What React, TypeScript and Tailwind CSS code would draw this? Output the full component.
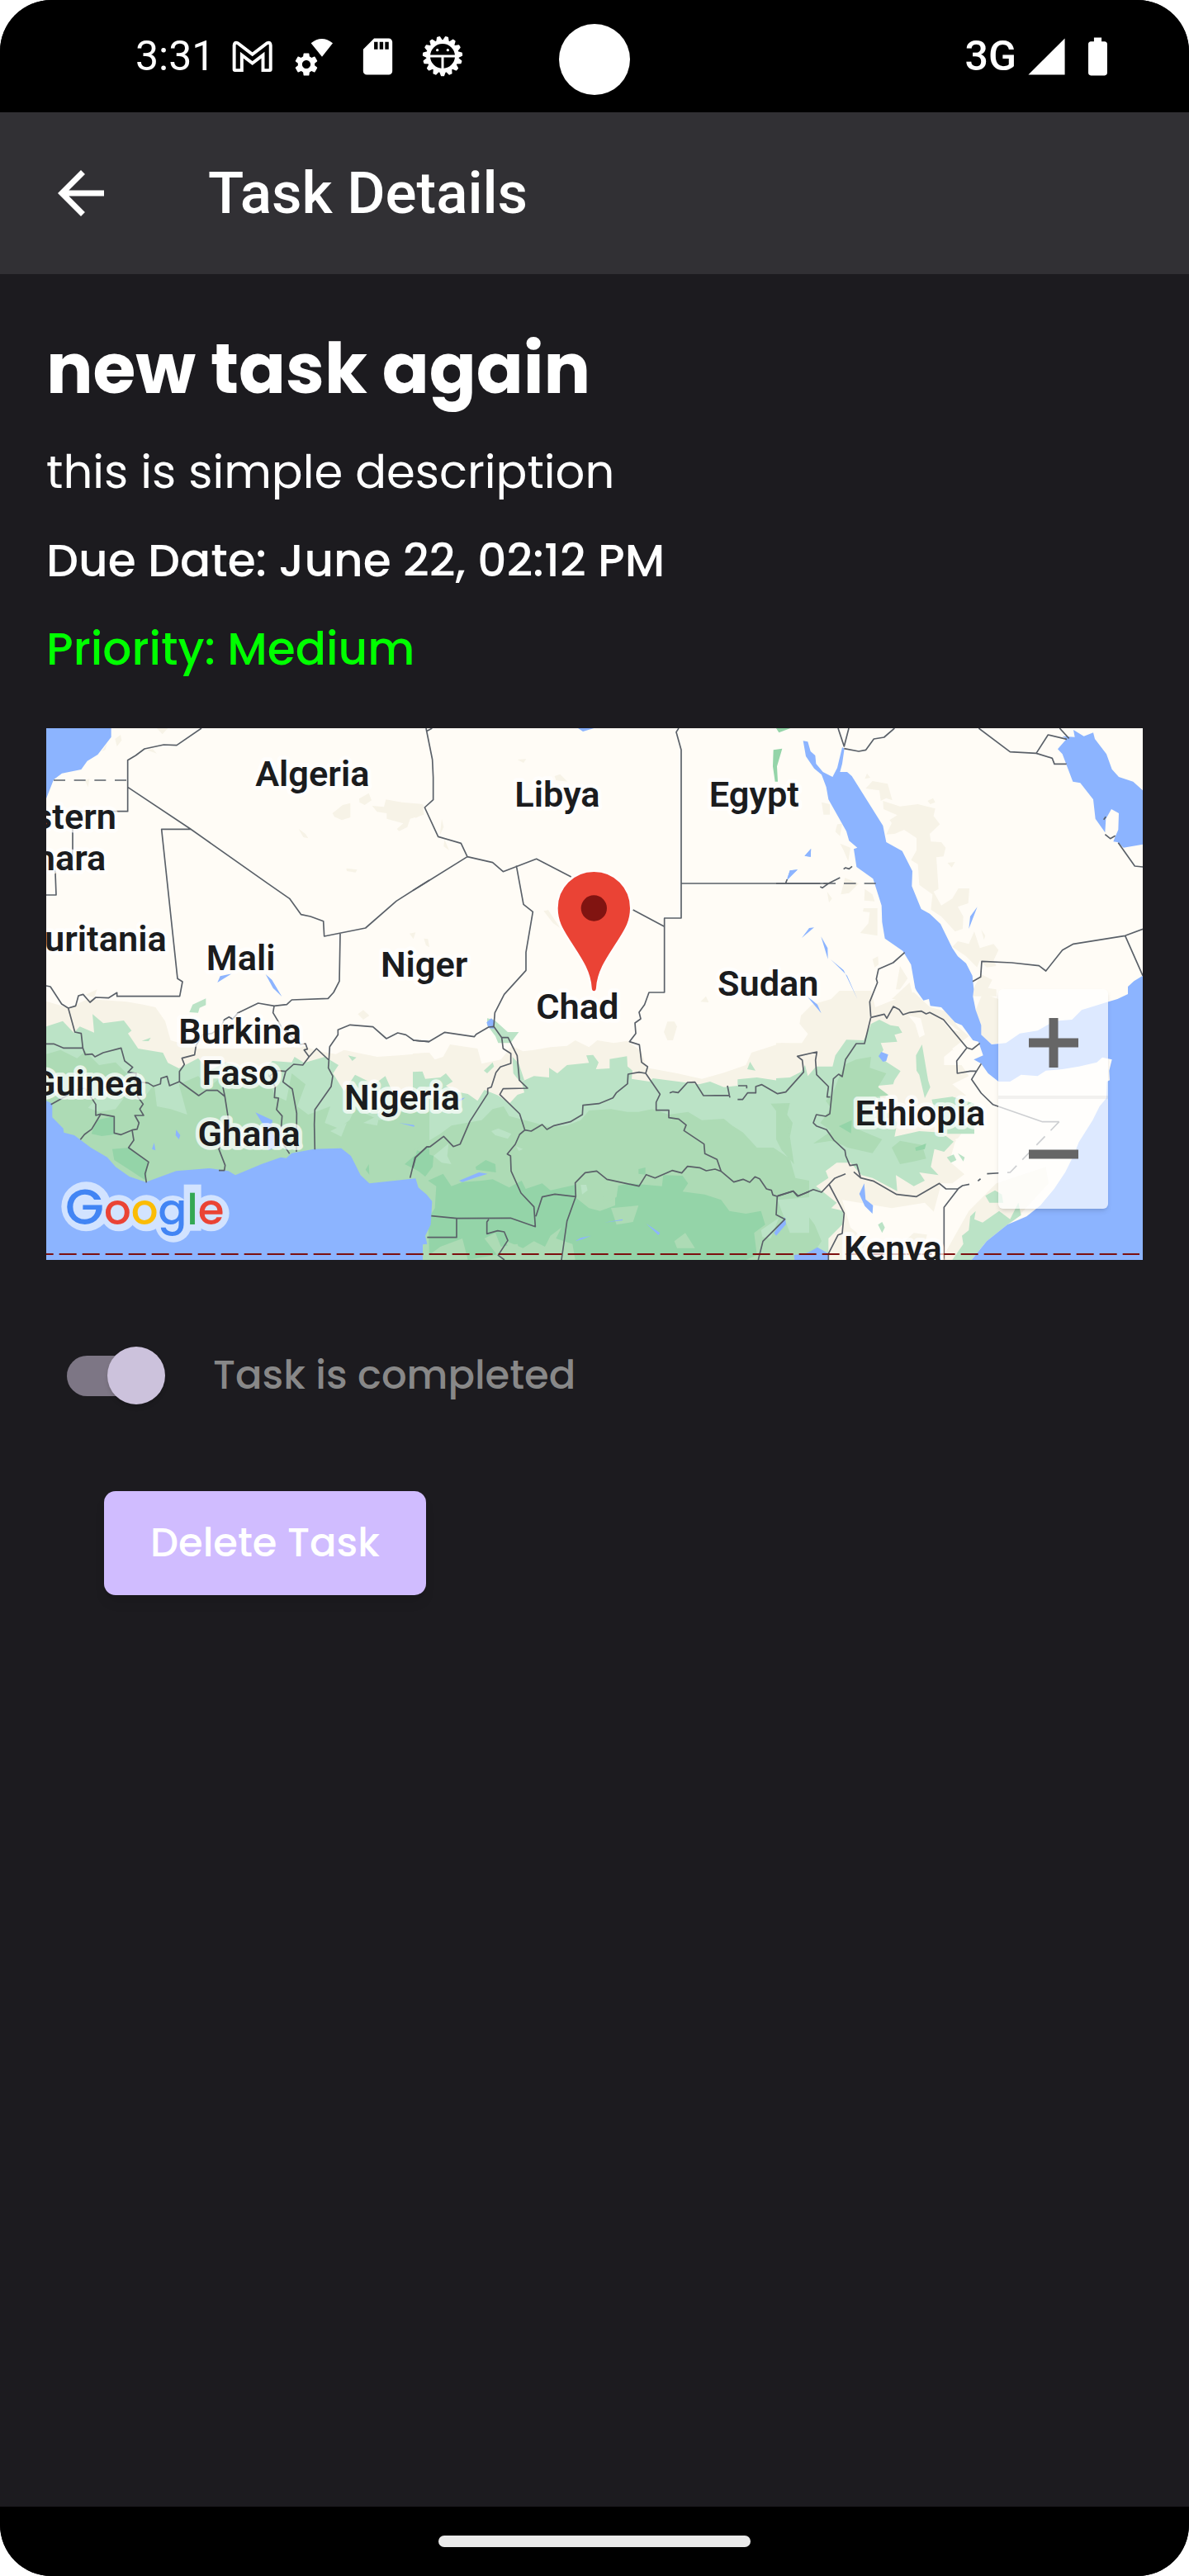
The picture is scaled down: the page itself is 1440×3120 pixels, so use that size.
import { useState } from "react";
import {
  MdArrowBack,
  MdBatteryFull,
  MdSdCard,
  MdSettings,
  MdSignalCellular4Bar,
} from "react-icons/md";

const BUG_TEETH = Array.from({ length: 15 }, (_, i) => 12 + i * 24);

function GmailIcon() {
  return (
    <svg viewBox="421 81 152 120" className="h-10 w-[50px]" aria-hidden="true">
      <path
        d="M429 190V101Q430 88 442 93L496 134L550 93Q562 88 563 101V190Q563 193 560 193H535V137L496 167L457 137V193H432Q429 193 429 190Z"
        fill="none"
        stroke="#fff"
        strokeWidth="12"
      />
    </svg>
  );
}

function WifiGearIcon() {
  return (
    <div className="relative h-[46px] w-[46px]">
      <svg viewBox="658 76 138 138" className="h-full w-full" aria-hidden="true">
        <path d="M714 98Q753 66 793 98L754 147Z" fill="#fff" />
      </svg>
      <MdSettings className="absolute -bottom-1 -left-1 size-[34px] text-white" />
    </div>
  );
}

function DebugIcon() {
  return (
    <svg viewBox="-75 -75 150 150" className="size-[50px]" aria-hidden="true">
      {BUG_TEETH.map((a) => (
        <path
          key={a}
          d="M-10 -54L-4 -70H4L10 -54Z"
          fill="#fff"
          stroke="#fff"
          strokeWidth="5"
          strokeLinejoin="round"
          transform={`rotate(${a})`}
        />
      ))}
      <circle r="52" fill="#000" stroke="#fff" strokeWidth="14" />
      <path d="M-46 0H46M0 0V48" stroke="#fff" strokeWidth="9" />
      <circle cx="-19" cy="-22" r="5" fill="#fff" />
      <circle cx="19" cy="-22" r="5" fill="#fff" />
    </svg>
  );
}

function StatusBar() {
  return (
    <div className="relative flex h-[136px] items-center justify-between bg-black pr-[83px] pl-[164px] font-[Roboto,sans-serif] text-white">
      <div className="flex items-center gap-[21px]">
        <span className="text-[50px] leading-none">3:31</span>
        <div className="flex items-center gap-[27px]">
          <GmailIcon />
          <WifiGearIcon />
          <MdSdCard className="size-[53px]" />
          <DebugIcon />
        </div>
      </div>
      <div className="absolute top-[29px] left-1/2 size-[86px] -translate-x-1/2 rounded-full bg-white" />
      <div className="flex items-center">
        <span className="mr-[10px] text-[50px] leading-none font-medium">3G</span>
        <MdSignalCellular4Bar className="mr-2 size-[53px]" />
        <MdBatteryFull className="size-[55px]" />
      </div>
    </div>
  );
}

type Label = { text: string; x: number; y: number; anchor?: "middle" | "end" };

const LABELS: Label[] = [
  { text: "Algeria", x: 1015, y: 245 },
  { text: "Western", x: 303, y: 403, anchor: "end" },
  { text: "Sahara", x: 265, y: 552, anchor: "end" },
  { text: "Mauritania", x: 485, y: 845, anchor: "end" },
  { text: "Mali", x: 755, y: 915 },
  { text: "Niger", x: 1421, y: 940 },
  { text: "Libya", x: 1905, y: 320 },
  { text: "Egypt", x: 2620, y: 320 },
  { text: "Sudan", x: 2671, y: 1008 },
  { text: "Chad", x: 1978, y: 1093 },
  { text: "Burkina", x: 752, y: 1183 },
  { text: "Faso", x: 753, y: 1333 },
  { text: "Guinea", x: 401, y: 1370, anchor: "end" },
  { text: "Ghana", x: 785, y: 1555 },
  { text: "Nigeria", x: 1341, y: 1423 },
  { text: "Ethiopia", x: 3223, y: 1480 },
  { text: "Kenya", x: 3124, y: 1970 },
];

/* Each group covers one sheet of the map: three columns by two rows. */
function MapDrawing() {
  return (
    <svg
      viewBox="48 36 3984 1932"
      preserveAspectRatio="xMidYMid slice"
      className="absolute inset-0 h-full w-full"
      role="img"
      aria-label="Map of northern and central Africa"
    >
      <rect x="48" y="36" width="3984" height="1932" fill="#fffcf6" />

      {/* Arid terrain */}
      <g fill="#f7f3e7">
        <path d="M298 75L318 60L322 80L305 102ZM250 120L270 90L262 115ZM450 36H490L470 58ZM188 225L205 220L200 250ZM1088 345L1125 315L1153 308V360L1122 370L1095 358ZM1185 292L1220 272L1230 298L1205 315L1186 305ZM1232 318L1275 322L1282 295L1340 305L1415 312L1420 350L1370 365L1360 395L1330 410L1322 402L1345 382L1285 365V345L1250 340ZM965 402L990 420L1000 436L982 432ZM1138 545L1178 550L1172 560L1140 555ZM190 1005L233 985L222 1015ZM1368 782L1390 778L1382 802ZM412 115L435 112L450 128Z" />
        <g transform="translate(1380 0)">
          <path d="M0 312L40 315L35 350L10 362L0 345ZM105 365L112 395L98 425ZM115 440L132 480L112 465ZM380 150L412 148L402 162ZM515 210L535 203L562 230L520 225ZM475 700L492 697L535 762L510 745ZM40 800L55 802L60 832L48 825Z" />
        </g>
        <g transform="translate(2700 0)">
          <path d="M322 220L330 200L342 216ZM325 255L350 228L405 238L422 298L400 290L380 300L375 262ZM388 300L450 320L515 312L578 328L572 355L595 385L558 420L562 448L600 450L616 470L608 502L582 505L590 620L572 630L600 680L640 655L662 618L702 618L698 672L660 685L680 720L678 765L650 775L600 720L562 695L568 640L520 605L515 530L490 515L510 480V435L465 405L430 420L400 422L420 380L412 370L440 352L390 330ZM165 305L195 312V350L172 350ZM222 385L240 383L232 428L215 412ZM232 455L270 470L262 520L245 480ZM250 580L300 600L265 635L235 640ZM185 630L203 655L192 670ZM322 620L350 640L358 665L320 662ZM318 690L368 690V790L305 780L335 745L340 705L315 702ZM550 300L570 290L578 305L560 312ZM622 525L650 522L638 542ZM660 810L700 820L720 775L740 835L790 820L808 842L790 880L800 900L765 905L740 880L730 905L690 865L640 830ZM745 768L760 790L755 805ZM350 875L370 865L372 895L358 905ZM745 930L785 950L770 980L800 985V1010H715V985ZM450 900L478 945L450 985L435 985ZM230 1015L270 990L295 1020ZM485 960L500 1020H420Z" />
        </g>
        <g transform="translate(0 990)">
          <path d="M48 38L130 62L200 30L340 40L400 50L445 60L480 110L500 180L600 210L880 210L980 200L1040 220L1100 230L1130 215L1250 240L1330 235L1440 225V470L1000 420H560L48 300ZM1180 85L1200 70L1222 90L1200 105Z" />
        </g>
        <g transform="translate(1380 990)">
          <path d="M0 228L60 225L80 250L110 240L135 195L235 210L250 265L320 250L360 200L400 220L440 215L500 205L560 200L590 180L640 205L670 180L730 190L780 182L830 220L850 280L960 300L1050 320L1130 298L1210 270L1230 225L1340 190L1410 195L1440 150V420H0ZM925 112L950 112L960 130L945 180L925 180L912 150ZM1045 40L1065 20L1075 42Z" />
        </g>
        <g transform="translate(2700 990)">
          <path d="M90 90L130 50L200 30L230 0H345L360 60L460 20L500 5L560 60L620 75L660 130L700 165L640 210L660 250L700 310L640 340L690 380L640 400L750 500L650 540L720 640L640 700L600 700L560 850L520 978H180L60 700L0 400V190L105 190L118 160L85 120Z" />
          <path d="M725 70L750 10L808 30V190L783 195L745 160ZM700 800L800 700L980 640L990 700L870 830L680 978H600Z" />
        </g>
      </g>
      <g fill="#fffcf6">
        <path d="M3180 1080L3225 1090L3240 1150L3220 1160L3205 1110ZM3290 1080L3370 1140L3330 1130ZM3310 1230L3340 1205L3400 1240L3380 1260L3310 1260ZM3350 1540L3380 1500L3500 1480V1600L3400 1670L3330 1610ZM3120 1780L3240 1760L3330 1850L3280 1880L3200 1870L3100 1960L2970 1850L2940 1750Z" />
      </g>

      {/* Savanna */}
      <g fill="#bbe3c6">
        <g transform="translate(0 990)">
          <path d="M48 130L108 110L148 152L170 130L222 152L216 85L255 118L330 108L358 145L345 155L382 210L472 225L490 262L530 282L600 245L640 290L700 260L820 300L870 255L940 260L950 240L985 262L1060 240L1110 270L1090 300L1130 365L1170 305L1240 340L1280 310L1320 400L1440 370V978H48ZM568 78L580 50L628 28L628 52L605 62L600 80ZM395 182L428 170L420 183ZM1145 235L1175 242L1160 255Z" />
        </g>
        <g transform="translate(1380 990)">
          <path d="M0 295L35 293L45 320L100 315L120 300L145 330L120 345L150 365L200 375L235 400L260 360L310 380L350 410L380 378L405 370L395 330L440 310L495 315L495 280L525 300L560 270L640 262L630 235L655 233L675 260L665 285L715 282L715 248L778 238L780 275L798 290L795 320L860 330L872 318L1040 340L1080 330L1130 350L1180 345V322L1250 315L1350 330L1440 320V978H0ZM270 100L295 105L345 150L385 150L355 190L310 190L300 165L270 125ZM362 240L385 265L405 325L388 330L365 300ZM258 290L290 260L295 275L270 300ZM1215 285L1225 258L1245 290Z" />
        </g>
        <g transform="translate(2700 990)">
          <path d="M0 318L50 315L90 295L105 270L115 310L145 275L205 275L215 235L255 178L318 180L345 120L375 105L415 125L445 130L458 152L430 160L440 185L380 190L390 215L375 235L400 258L452 292L430 325L425 340L370 345L380 400L440 480L430 530L520 510L600 515L645 548L610 585L575 575L562 640L590 670L520 660L540 690L500 710L435 670L440 728L350 680L310 670L270 625L220 625L180 655L190 680L145 710L220 770L200 790L245 800L240 850L190 900V978H0ZM508 235L530 195L552 325L560 350L540 390L520 305L510 290ZM565 395L640 385L720 410V520H600ZM620 605L645 595L655 615L635 625ZM680 620L660 590L685 605ZM760 745L795 725L820 740L825 770L775 770ZM705 820L725 800L720 830L750 842L810 800L850 830L880 770L890 815L840 850L765 910L710 978H640L680 920L675 890L700 870ZM370 850L385 840L395 860L385 880Z" />
        </g>
      </g>

      {/* Woodland */}
      <g fill="#addbb5">
        <g transform="translate(0 990)">
          <path d="M48 230L100 215L160 245L190 220L240 270L300 260L340 300L390 300L380 360L410 380L440 340L450 420L500 430L560 450L530 340L600 310L640 350L700 300L760 340L840 300L880 380L920 400L940 300L990 340L960 420L1000 450L1080 420L1060 480L1110 500L1150 470L1170 430L1260 470L1330 440L1440 440V760L48 720Z" />
        </g>
        <g transform="translate(1380 990)">
          <path d="M0 580L100 520L140 490L250 470L290 430L330 420L350 455L500 495L560 490L610 470L640 435L720 430L780 440L820 440L870 430L930 450L1000 440L1050 470L1130 465L1160 490L1200 515L1250 570L1310 570L1370 610L1390 680L1440 690V978H0ZM1300 410L1370 408L1360 450L1380 480L1370 530L1385 630L1350 590L1345 470Z" />
        </g>
        <g transform="translate(2700 990)">
          <path d="M250 268L290 250L345 240L340 280L400 300L370 350L410 380L300 390L310 420L210 440L180 400L205 375L230 310ZM0 430L30 410L60 620L20 580L0 540ZM135 555L200 510L160 480L220 400L290 380L290 500L385 540L350 590L260 570L240 560L200 545ZM420 570L450 545L530 560L545 610L500 620L450 630ZM0 790L80 770L140 850L165 910L120 978H0Z" />
        </g>
      </g>
      <g fill="#bbe3c6">
        <g transform="translate(1380 990)">
          <path d="M285 510L310 500L358 520L345 538L300 525ZM75 600L130 555L125 600L140 630L105 625ZM375 565L400 575L385 582ZM610 705L630 705L635 725L615 740ZM1265 870L1330 825L1300 900L1270 895ZM1325 760L1440 750V880L1370 880L1340 800Z" />
        </g>
        <path d="M200 1415L250 1360L330 1380L300 1420L240 1430ZM1200 1470L1260 1440L1250 1480ZM1080 1500L1140 1470L1120 1520Z" />
      </g>

      {/* Rain forest */}
      <g fill="#94d4a8">
        <g transform="translate(0 990)">
          <path d="M212 520L230 470L295 455V522L250 528ZM288 575L350 570L418 620L410 690L350 650L295 615ZM1350 630L1385 600L1440 565V650L1400 655ZM1208 650L1220 630L1222 668Z" />
        </g>
        <g transform="translate(1380 990)">
          <path d="M0 640L15 580L75 600L72 640L45 675L0 640ZM55 690L110 665L140 710L180 695L250 690L290 685L350 715L395 690L410 720L470 700L500 725L590 705L590 750L640 790L680 800L735 780V710L790 700L905 710L910 670L980 672L1000 700L980 730L1060 740L1120 760L1150 800L1210 810L1265 800L1280 850L1240 880L1250 960L1210 978H590L580 920L520 900L540 860L500 890L480 930L440 910L400 935L340 910L350 950L200 978L180 900L100 930L60 960L55 830L80 790L85 710ZM228 640L265 615L300 630L302 660L230 650ZM820 648L845 642L845 668L820 665Z" />
        </g>
        <path d="M2928 1482L2975 1460L2972 1508ZM3205 1560L3245 1545L3240 1565L3208 1572ZM2690 115L2722 110L2703 175L2706 230L2696 230L2688 175Z" />
        <path d="M2700 36H2752L2710 52Z" />
      </g>
      <g fill="#addbb5">
        <path d="M1640 1890L1680 1870L1700 1920L1760 1910L1780 1968H1700ZM2100 1780L2200 1770L2180 1830L2120 1840ZM2330 1900L2370 1870L2405 1925H2340ZM2080 1680L2130 1670L2120 1740L2070 1760Z" />
      </g>

      {/* Seas, lakes and rivers */}
      <g fill="#8cb4ff">
        <path d="M48 36H284V68L235 132L197 155L175 186L105 200L75 223L48 292Z" />
        <path d="M670 960L680 937L722 928ZM845 930L868 950L904 1011L872 980Z" />
        <g transform="translate(0 990)">
          <path d="M48 400L70 410V460L110 500L112 515L150 525L210 570L270 605L300 640L350 675L410 695L520 655L640 645L710 655L735 670L830 630L900 605L920 608L940 590L1020 575L1120 572L1155 600L1190 670L1222 700L1390 682L1400 715L1430 740L1450 765L1445 850L1425 890L1432 920L1416 922V978H48ZM808 442L870 470L865 510L900 560L855 580L845 500ZM520 505L535 525L530 540L518 525ZM440 552L445 580L432 575ZM1330 480L1385 488V494Z" />
        </g>
        <g transform="translate(1380 0)">
          <path d="M600 36H658L618 48ZM1360 582L1370 553L1398 550ZM1424 500L1446 475V503Z" />
          <path d="M268 1105L285 1090L298 1103L294 1128L275 1125ZM168 1680L240 1650L272 1655L230 1668L180 1685ZM590 1900L610 1888L648 1880L615 1893ZM848 1836L898 1870L892 1878ZM696 1832L762 1820V1824ZM1312 1870L1352 1812L1356 1838L1320 1880ZM1385 1955L1440 1940V1968H1388ZM150 1390L190 1378L175 1390Z" />
        </g>
        <g transform="translate(2700 0)">
          <path d="M98 82L115 85L125 120L142 135L145 165L170 195L205 213L222 180L240 105L248 110L240 165L232 195H258L275 210L388 390L400 450L458 482L495 555L493 610L527 693L558 710L597 747L640 835L660 865L690 890L713 935L718 985L715 1010L725 1060L745 1115V1150L783 1185L835 1180L885 1145L950 1135L1010 1100L1075 1095L1110 1060L1200 1032L1240 1020L1278 1002V975L1300 955L1332 935V1968H710L765 1900L840 1840L910 1810L960 1770L1010 1710L1050 1650L1080 1590L1100 1540L1150 1460L1175 1410L1200 1380L1202 1320L1212 1315L1210 1280L1220 1240L1185 1232L1165 1250L1100 1265L1040 1275L980 1280L950 1300L890 1295L850 1320H808L770 1290L745 1255L718 1240L752 1225L735 1175L715 1170L675 1115L650 1105L600 1050L560 1045L555 1020L535 1025L510 990L505 980L490 895L460 845L395 800L385 740L383 680L352 583L292 540L282 475L295 470L265 445L255 410L190 295L182 250L165 205L138 182L108 138Z" />
          <path d="M1040 65L1085 68L1080 42L1118 65L1152 52L1158 75L1200 130L1220 185L1245 213L1297 230L1332 262V458L1262 470L1240 450L1225 448L1232 430L1243 405L1245 345L1218 330L1198 365L1195 415L1160 365L1152 295L1105 235L1078 230L1040 130L1023 112L1055 75Z" />
          <path d="M103 500L127 473L125 503ZM38 590L50 553L78 550ZM93 798L120 762L138 760ZM163 793L187 835L188 875ZM198 876L245 915L295 1020L258 935ZM700 765L705 720L731 685ZM108 1005L150 1040L164 1072ZM372 1228L382 1212L407 1222L400 1245L388 1248ZM302 1728L320 1690L325 1748L352 1770L350 1800L322 1772ZM65 1950L110 1945L150 1922L190 1945V1968H68Z" />
        </g>
      </g>

      {/* Borders */}
      <g fill="none" stroke="#5a6068" strokeWidth="5" strokeLinejoin="round">
        <path d="M612 36L522 98L475 96L405 111L373 135L344 152V338H150M344 250L572 402L850 598L932 655L974 713L1008 720L1055 737L1058 792L1208 762L1320 664L1440 588M572 403H467L525 946L543 957L533 1010H305V997L274 1016L228 1014L207 1032L182 1003L165 1008L155 1045L128 1053M144 403V530L80 535L84 642H48M1116 783L1113 955L1092 996L1072 1018L940 1023L922 1040L876 1045L818 1035L745 1070M48 972L63 975L104 1038L128 1053" />
        <path d="M75 225H344" strokeDasharray="42 32" />
        <g transform="translate(1380 0)">
          <path d="M48 36L71 150L74 215V296L43 324L92 430L175 454L198 503L290 524L328 557L449 511L575 576M800 696L914 757M0 626L198 503M48 48L70 36M966 36L957 50L975 115V726H914V996H858L842 1040L822 1068L828 1092L807 1107L810 1145L787 1175L823 1186L831 1250L853 1266L846 1290M376 535L402 676L436 703L411 850V916L332 1003L298 1070L294 1120M975 600H1480M1355 598L1360 585" />
        </g>
        <g transform="translate(2700 0)">
          <path d="M225 36L247 102L264 36M247 110L300 120L326 115L355 75L392 69L430 36M736 36L850 122L945 127L988 60L1056 76M1030 36L1064 73M945 127L1003 145L1011 166H1055M1190 368L1198 358M1195 422L1214 437L1232 427M1243 452L1303 537L1332 540M1332 766L1268 790L1080 820L1040 842L980 918L955 899L855 888L747 883L743 940L714 956M1268 790L1332 935M0 600H190L232 579M160 612L168 616L190 600M245 548L252 543L265 547L276 538M467 851L425 888L372 911L364 947L368 960L340 1030L344 1085" />
          <path d="M172 600H362" strokeDasharray="44 30" />
        </g>
        <g transform="translate(0 990)">
          <path d="M128 63L152 150L175 155L181 208H110L75 193H48M181 208L190 232L215 230L225 240L255 225L320 208L333 255L362 278L345 296L375 300L370 330L418 335L437 347L463 338L465 318L487 311L496 345L532 330L602 381L630 362H670L697 384L715 500L675 575L698 634L695 653H675M532 330V293L550 268L541 245L587 233L592 200L615 160L650 155L680 135L695 105L712 95L725 103L745 80M65 413L170 355L190 355L228 413V453L245 448L295 457V517L320 523L360 506L378 503L385 480L370 453H402L388 430L400 412L380 385L385 350M245 450L213 503L187 522L172 541M360 506L366 543L347 570L420 622L407 665L412 697M876 55L872 80L905 135L970 195L990 192L997 212L985 215L1003 240L1030 210L1075 252L1073 280L1089 310L1083 348L1024 432L1022 485L1024 577M1075 252L1078 203L1108 160V142L1152 124L1235 131L1284 174L1325 153L1355 160L1383 180L1440 185M1003 240L980 270L947 267L918 293L908 331L942 357L958 445L957 585M918 293L885 290L860 310L880 350L877 388L892 390L885 432L905 455L898 540L932 592M690 350L697 384M1370 680L1388 606L1432 567H1440" />
        </g>
        <g transform="translate(1380 990)">
          <path d="M0 180L58 185L116 151L223 167L230 158L275 132L294 130L323 170H346L379 236L387 325L417 354L328 356L316 377L388 447L407 506L388 522L372 558L343 593L355 600L357 655L393 735L440 785L445 857L355 826L160 827L67 818M323 170L328 210L356 228V264L318 277L302 297L285 350L272 355V374L207 475L172 557L147 566L112 529L62 567H50L10 606L0 643M52 896H159V827M276 830L269 840V883L308 872L332 876L345 907L310 961L333 978M447 820L470 749L516 739L592 748L560 837L540 978M592 748L590 698L626 661L668 655L705 685L822 710L848 668L880 680L942 653L977 662L998 638L1042 643L1066 654L1098 648L1120 656L1105 613L1061 592L1058 557L985 508L993 488L966 466L930 461V434H884V405L898 376L846 300L822 296L782 303L780 338L740 370L727 389L676 410L618 416L616 450L572 476L513 490L487 504L470 486L430 510L407 506M1120 656L1166 695L1200 685L1224 696L1243 676L1260 683L1285 720L1303 725L1308 742L1324 747L1382 728L1397 746L1440 730M1324 747L1320 814L1352 830L1272 910L1255 978M933 371L945 367L964 370L998 333L1025 332L1056 381L1150 380L1152 388M1150 380L1143 345M1182 345H1213V355M1180 395H1198L1216 371H1246V348L1268 341L1325 374L1355 368L1420 295L1415 252L1397 238L1468 222L1463 252L1467 305L1510 348L1505 386H1516" />
        </g>
        <g transform="translate(2700 990)">
          <path d="M344 97L393 85L402 100L426 57L447 68L461 87L485 79L528 74L545 84L558 79L608 105L693 207L712 213L740 191M344 97L321 192H291L252 250L240 312L227 303L208 320L195 447L180 456L146 450L135 480L146 491L183 505L210 543L250 580L253 600L268 635L293 631L307 680L355 692L438 740L510 748L593 700L617 720H660L677 708L702 703M693 207L656 255L658 300L705 292H728L710 322L745 372L787 413L968 476H1028M728 292L745 265M307 680L282 658M252 665L212 682L165 732L135 722L80 746L62 728L5 745M193 705L247 808L240 882L225 887L190 955V978M663 718L610 787V978" />
          <path d="M1028 476L850 660L765 665L733 691" strokeDasharray="44 30" />
        </g>
      </g>
      <path d="M11 1947H4020" stroke="#7d0f0f" strokeWidth="6" strokeDasharray="63 21" fill="none" />

      <g
        fill="#1b1c1e"
        stroke="#ffffff"
        strokeOpacity="0.72"
        strokeWidth="28"
        strokeLinejoin="round"
        fontFamily="Roboto, sans-serif"
        fontSize="130"
        fontWeight="600"
        className="[paint-order:stroke]"
      >
        {LABELS.map((l) => (
          <text key={l.text} x={l.x} y={l.y} textAnchor={l.anchor ?? "middle"}>
            {l.text}
          </text>
        ))}
      </g>

      <path
        d="M2038 555C1963 555 1904 615 1904 690C1904 740 1925 770 1950 810C1985 865 2023 915 2027 978Q2028 994 2038 994Q2048 994 2049 978C2053 915 2091 865 2126 810C2151 770 2172 740 2172 690C2172 615 2113 555 2038 555Z"
        fill="#ea4335"
        stroke="#fff"
        strokeWidth="6"
      />
      <circle cx="2038" cy="690" r="47" fill="#811411" />

      <g transform="translate(0 990)">
        <g fill="#d2e3ff">
          <circle cx="193" cy="784" r="90" />
          <circle cx="312" cy="808" r="66" />
          <circle cx="412" cy="808" r="66" />
          <circle cx="508" cy="808" r="64" />
          <circle cx="510" cy="848" r="66" />
          <rect x="548" y="704" width="63" height="168" />
          <circle cx="647" cy="808" r="66" />
        </g>
        <text x="117" y="850" fontFamily="Poppins, sans-serif" fontSize="154" fontWeight="500">
          <tspan fill="#4285f4" fontSize="182">G</tspan>
          <tspan fill="#ea4335">o</tspan>
          <tspan fill="#fbbc05">o</tspan>
          <tspan fill="#4285f4">g</tspan>
          <tspan fill="#34a853">l</tspan>
          <tspan fill="#ea4335">e</tspan>
        </text>
      </g>
    </svg>
  );
}

function TaskMap() {
  return (
    <section className="relative mt-[31px] h-[644px] overflow-hidden">
      <MapDrawing />
      <div className="absolute right-[42px] bottom-[62px] flex w-[133px] flex-col rounded-md bg-white/70 shadow-md">
        <button type="button" aria-label="Zoom in" className="flex h-[133px] items-center justify-center border-b-4 border-black/5">
          <svg viewBox="0 0 60 60" className="size-[60px]" aria-hidden="true">
            <path d="M30 0V60M0 30H60" stroke="#666" strokeWidth="11" />
          </svg>
        </button>
        <button type="button" aria-label="Zoom out" className="flex h-[133px] items-center justify-center">
          <svg viewBox="0 0 60 60" className="size-[60px]" aria-hidden="true">
            <path d="M0 30H60" stroke="#666" strokeWidth="11" />
          </svg>
        </button>
      </div>
    </section>
  );
}

export default function App() {
  const [done, setDone] = useState(true);

  return (
    <div className="bg-white">
      <div className="flex min-h-screen flex-col overflow-hidden rounded-[62px] bg-[#1c1b1f] font-[Poppins,Inter,sans-serif] text-white">
        <StatusBar />
        <header className="flex h-[196px] items-center gap-[112px] bg-[#313034] px-14">
          <button type="button" aria-label="Back">
            <MdArrowBack className="size-[84px]" />
          </button>
          <h1 className="font-[Roboto,sans-serif] text-[71px] font-medium">Task Details</h1>
        </header>
        <main className="flex flex-1 flex-col gap-[23px] px-14 pt-[55px]">
          <h2 className="text-[84px] leading-[120px] font-bold">new task again</h2>
          <p className="text-[56px] leading-[84px]">this is simple description</p>
          <p className="text-[55px] leading-[84px] font-medium">Due Date: June 22, 02:12 PM</p>
          <p className="text-[55px] leading-[84px] font-medium text-[#00ff00]">Priority: Medium</p>
          <TaskMap />
          <label className="mt-[82px] flex h-[70px] items-center gap-[58px] pl-[25px] text-[48px] font-medium text-[#888]">
            <span className="relative flex h-[70px] w-[119px] items-center">
              <input
                type="checkbox"
                role="switch"
                checked={done}
                onChange={(e) => setDone(e.target.checked)}
                className="peer h-[49px] w-[110px] appearance-none rounded-full bg-[#7d7685]"
              />
              <span className="pointer-events-none absolute top-0 left-0 size-[70px] rounded-full bg-[#ccc2dc] shadow-md peer-checked:right-0 peer-checked:left-auto" />
            </span>
            Task is completed
          </label>
          <button
            type="button"
            className="mt-[82px] ml-[70px] h-[126px] self-start rounded-[14px] bg-[#d0bcff] px-14 text-[48px] font-medium text-white shadow-lg"
          >
            Delete Task
          </button>
        </main>
        <footer className="flex h-[84px] items-center justify-center bg-black">
          <div className="h-[14px] w-[378px] rounded-full bg-[#eaeaea]" />
        </footer>
      </div>
    </div>
  );
}
